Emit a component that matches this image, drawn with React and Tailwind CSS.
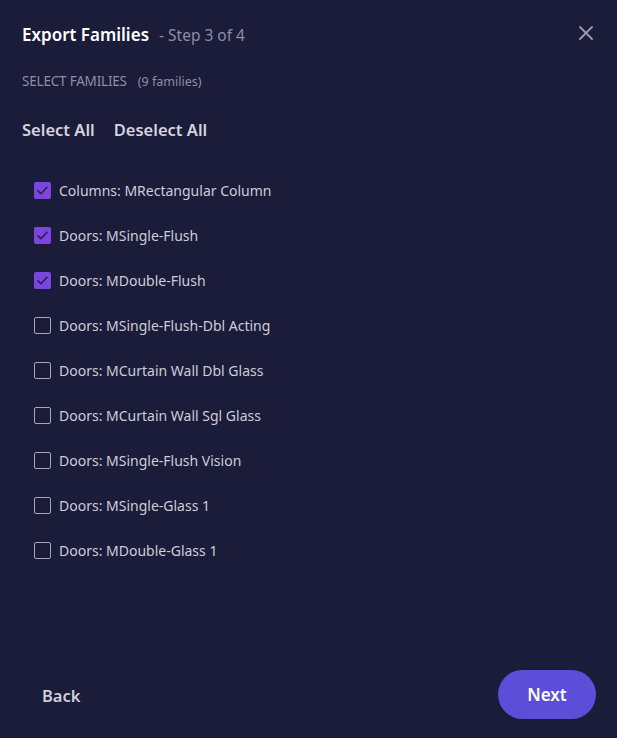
import React, { useState } from "react";

const items = [
  ["Columns: MRectangular Column", true],
  ["Doors: MSingle-Flush", true],
  ["Doors: MDouble-Flush", true],
  ["Doors: MSingle-Flush-Dbl Acting", false],
  ["Doors: MCurtain Wall Dbl Glass", false],
  ["Doors: MCurtain Wall Sgl Glass", false],
  ["Doors: MSingle-Flush Vision", false],
  ["Doors: MSingle-Glass 1", false],
  ["Doors: MDouble-Glass 1", false],
];

function Box({ checked }) {
  if (checked) {
    return (
      <span className="w-[17px] h-[17px] rounded-[2px] bg-[#7b46e0] flex items-center justify-center shrink-0">
        <svg width="13" height="13" viewBox="0 0 16 16" fill="none">
          <path d="M2.5 8.5l3.5 3.5 7.5-8" stroke="#2a1f55" strokeWidth="2" strokeLinecap="round" strokeLinejoin="round" />
        </svg>
      </span>
    );
  }
  return <span className="w-[17px] h-[17px] rounded-[2px] border-[1.5px] border-[#a6a6b6] shrink-0" />;
}

export default function App() {
  const [sel, setSel] = useState(items.map((i) => i[1]));
  return (
    <div className="w-[617px] h-[738px] bg-[#1b1b3a] flex flex-col" style={{ fontFamily: '"Noto Sans", sans-serif' }}>
      <div className="flex items-center justify-between pl-[22px] pr-[24px] pt-[22px]">
        <div className="flex items-baseline gap-[10px]">
          <span className="text-[17px] font-semibold text-white leading-[26px]">Export Families</span>
          <span className="text-[15.5px] text-[#8e8ea4]">- Step 3 of 4</span>
        </div>
        <svg width="14" height="14" viewBox="0 0 14 14" className="mt-[-4px]">
          <path d="M1 1l12 12M13 1L1 13" stroke="#9a9ab0" strokeWidth="1.8" strokeLinecap="round" />
        </svg>
      </div>
      <div className="pl-[22px] mt-[23px] flex items-baseline gap-[11px]">
        <span className="text-[13.5px] text-[#8e8ea4] uppercase tracking-[-0.2px]">Select Families</span>
        <span className="text-[12.5px] text-[#8e8ea4]">(9 families)</span>
      </div>
      <div className="pl-[22px] mt-[26px] flex gap-[19px]">
        <button className="text-[16.5px] font-semibold text-[#d4d4de]">Select All</button>
        <button className="text-[16.5px] font-semibold text-[#d4d4de]">Deselect All</button>
      </div>
      <div className="pl-[34px] mt-[37px] flex flex-col gap-[24px]">
        {items.map(([label], i) => (
          <label key={label} className="flex items-center gap-[8px] h-[21px] cursor-pointer" onClick={() => setSel(sel.map((v, j) => (j === i ? !v : v)))}>
            <Box checked={sel[i]} />
            <span className="text-[14px] text-[#cdcdd8]">{label}</span>
          </label>
        ))}
      </div>
      <div className="mt-auto flex items-center justify-between pl-[42px] pr-[21px] pb-[19px]">
        <button className="text-[16.5px] font-semibold text-[#cfcfd9] mt-[3px]">Back</button>
        <button className="w-[98px] h-[49px] rounded-full bg-[#5c4ed9] text-white text-[17px] font-semibold">Next</button>
      </div>
    </div>
  );
}
